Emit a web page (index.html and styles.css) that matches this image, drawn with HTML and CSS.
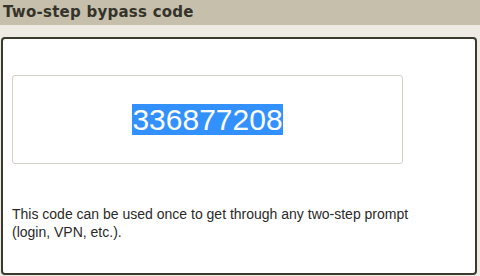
FILE: index.html
```html
<!DOCTYPE html>
<html>
<head>
<meta charset="utf-8">
<link rel="stylesheet" href="styles.css">
</head>
<body>
<div class="header">Two-step bypass code</div>
<div class="panel">
  <div class="code-box"><span class="code">336877208</span></div>
  <p class="desc">This code can be used once to get through any two-step prompt<br>(login, VPN, etc.).</p>
</div>
</body>
</html>
```
FILE: styles.css
```css
html, body {
  margin: 0;
  padding: 0;
}
body {
  width: 480px;
  height: 276px;
  background: #eeebe4;
  overflow: hidden;
  font-family: "Liberation Sans", Arial, sans-serif;
}
.header {
  height: 25px;
  line-height: 25px;
  background: #c5bfac;
  color: #35332a;
  font-family: "DejaVu Sans", Verdana, sans-serif;
  font-weight: bold;
  font-size: 15px;
  letter-spacing: 0.25px;
  padding-left: 3px;
  box-sizing: border-box;
}
.panel {
  margin: 12px 3px 0 1px;
  height: 238px;
  box-sizing: border-box;
  border: 2px solid #3b3b2d;
  border-radius: 4px;
  background: #fff;
  padding: 36px 0 0 9px;
}
.code-box {
  width: 391px;
  height: 89px;
  box-sizing: border-box;
  border: 1px solid #d3d0c5;
  border-radius: 3px;
  display: flex;
  align-items: center;
  justify-content: center;
}
.code {
  background: #3390ff;
  color: #fff;
  font-size: 30px;
  line-height: 31px;
  height: 31px;
  display: inline-block;
}
.desc {
  margin: 41px 0 0 0;
  font-size: 14px;
  line-height: 18px;
  color: #2a2a2a;
}
```
